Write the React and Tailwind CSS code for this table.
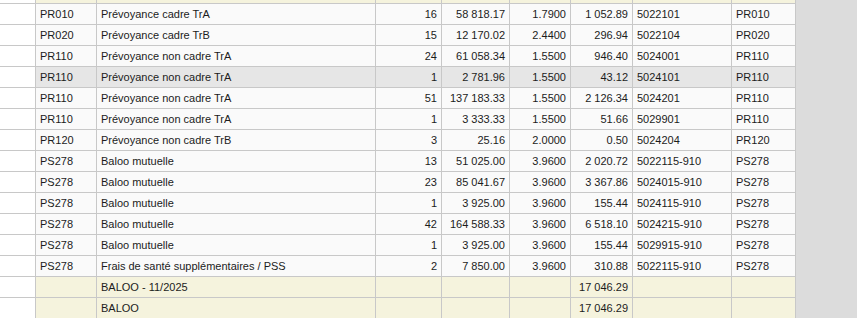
import React from "react";

const cols = "grid grid-cols-[36px_61px_279px_66px_68px_61px_62px_99px_64px]";

const rows = [
  ["PR010", "Prévoyance cadre TrA", "16", "58 818.17", "1.7900", "1 052.89", "5022101", "PR010"],
  ["PR020", "Prévoyance cadre TrB", "15", "12 170.02", "2.4400", "296.94", "5022104", "PR020"],
  ["PR110", "Prévoyance non cadre TrA", "24", "61 058.34", "1.5500", "946.40", "5024001", "PR110"],
  ["PR110", "Prévoyance non cadre TrA", "1", "2 781.96", "1.5500", "43.12", "5024101", "PR110", true],
  ["PR110", "Prévoyance non cadre TrA", "51", "137 183.33", "1.5500", "2 126.34", "5024201", "PR110"],
  ["PR110", "Prévoyance non cadre TrA", "1", "3 333.33", "1.5500", "51.66", "5029901", "PR110"],
  ["PR120", "Prévoyance non cadre TrB", "3", "25.16", "2.0000", "0.50", "5024204", "PR120"],
  ["PS278", "Baloo mutuelle", "13", "51 025.00", "3.9600", "2 020.72", "5022115-910", "PS278"],
  ["PS278", "Baloo mutuelle", "23", "85 041.67", "3.9600", "3 367.86", "5024015-910", "PS278"],
  ["PS278", "Baloo mutuelle", "1", "3 925.00", "3.9600", "155.44", "5024115-910", "PS278"],
  ["PS278", "Baloo mutuelle", "42", "164 588.33", "3.9600", "6 518.10", "5024215-910", "PS278"],
  ["PS278", "Baloo mutuelle", "1", "3 925.00", "3.9600", "155.44", "5029915-910", "PS278"],
  ["PS278", "Frais de santé supplémentaires / PSS", "2", "7 850.00", "3.9600", "310.88", "5022115-910", "PS278"],
];

const totals = [
  ["BALOO - 11/2025", "17 046.29"],
  ["BALOO", "17 046.29"],
];

// right aligned columns: qty, base, rate, amount
const rightCols = [2, 3, 4, 5];

const Cell = ({ children, right, bg }) => (
  <div
    className={`h-[21px] border-r border-b border-[#c8c8c8] px-[4px] leading-[20px] whitespace-nowrap overflow-hidden ${
      right ? "text-right" : "text-left"
    } ${bg}`}
  >
    {children}
  </div>
);

const App = () => {
  return (
    <div className="flex w-[857px] h-[318px] overflow-hidden bg-[#dcdcdc] font-['Liberation_Sans',Arial,sans-serif] text-[11px] text-[#1c1c1c]">
      <div className="w-[796px] bg-white">
        {/* tail of the previous total row */}
        <div className={cols}>
          <div className="h-[4px] border-r border-b border-[#c8c8c8] bg-white"></div>
          {Array.from({ length: 8 }).map((_, i) => (
            <div key={i} className="h-[4px] border-r border-b border-[#c8c8c8] bg-[#f5f3dd]"></div>
          ))}
        </div>

        {rows.map((r, idx) => {
          const bg = r[8] ? "bg-[#e6e6e6]" : "bg-[#fafafa]";
          return (
            <div key={idx} className={cols}>
              <Cell bg="bg-white" />
              {r.slice(0, 8).map((v, i) => (
                <Cell key={i} right={rightCols.includes(i)} bg={bg}>
                  {v}
                </Cell>
              ))}
            </div>
          );
        })}

        {totals.map((t, idx) => (
          <div key={idx} className={cols}>
            <Cell bg="bg-white" />
            <Cell bg="bg-[#f5f3dd]" />
            <Cell bg="bg-[#f5f3dd]">{t[0]}</Cell>
            <Cell bg="bg-[#f5f3dd]" />
            <Cell bg="bg-[#f5f3dd]" />
            <Cell bg="bg-[#f5f3dd]" />
            <Cell right bg="bg-[#f5f3dd]">
              {t[1]}
            </Cell>
            <Cell bg="bg-[#f5f3dd]" />
            <Cell bg="bg-[#f5f3dd]" />
          </div>
        ))}
      </div>
    </div>
  );
};

export default App;
